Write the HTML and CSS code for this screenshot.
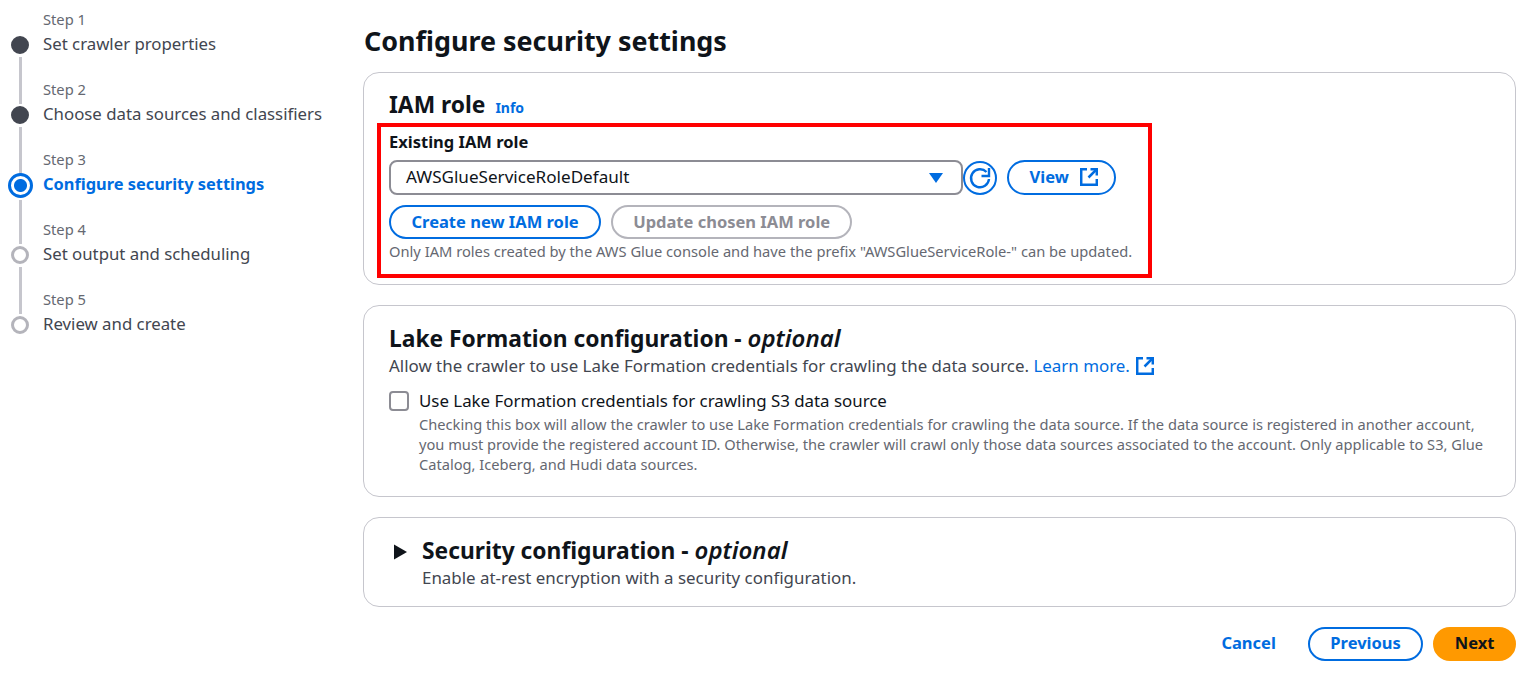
FILE: index.html
```html
<!DOCTYPE html>
<html>
<head>
    <title>Configure security settings</title>
    <link rel="stylesheet" href="styles.css">
</head>
<body>
    <div class="page">
        <ul class="steps">
            <li class="step done">
                <span class="step-num">Step 1</span>
                <span class="dot"></span>
                <span class="step-name">Set crawler properties</span>
            </li>
            <li class="step done">
                <span class="step-num">Step 2</span>
                <span class="dot"></span>
                <span class="step-name">Choose data sources and classifiers</span>
            </li>
            <li class="step active">
                <span class="step-num">Step 3</span>
                <span class="dot"></span>
                <span class="step-name">Configure security settings</span>
            </li>
            <li class="step">
                <span class="step-num">Step 4</span>
                <span class="dot"></span>
                <span class="step-name">Set output and scheduling</span>
            </li>
            <li class="step last">
                <span class="step-num">Step 5</span>
                <span class="dot"></span>
                <span class="step-name">Review and create</span>
            </li>
        </ul>

        <main class="content">
            <h1>Configure security settings</h1>

            <section class="card card-iam">
                <h2>IAM role <a href="#" class="info">Info</a></h2>
                <div class="highlight">
                    <label class="field-label">Existing IAM role</label>
                    <div class="role-row">
                        <div class="select">
                            <span>AWSGlueServiceRoleDefault</span>
                            <svg class="caret" width="14" height="10" viewBox="0 0 14 10"><path d="M0 0h14L7 10z" fill="#006ce0"/></svg>
                        </div>
                        <button class="icon-btn">
                            <svg width="24" height="24" viewBox="0 0 24 24" fill="none" stroke="#006ce0" stroke-width="2.4"><path d="M21 13A9 9 0 1 1 18.500 6"/><path d="M21 2v8h-7.500"/></svg>
                        </button>
                        <button class="btn view-btn">View
                            <svg class="ext" width="18" height="18" viewBox="0 0 18 18" fill="none" stroke="#006ce0" stroke-width="2.5"><path d="M7 1.200H1.200v15.600h15.600V11"/><path d="M10.500 1.200h6.300v6.300"/><path d="M16.800 1.200L8.500 9.500"/></svg>
                        </button>
                    </div>
                    <div class="btn-row">
                        <button class="btn">Create new IAM role</button>
                        <button class="btn disabled">Update chosen IAM role</button>
                    </div>
                    <p class="hint">Only IAM roles created by the AWS Glue console and have the prefix "AWSGlueServiceRole-" can be updated.</p>
                </div>
            </section>

            <section class="card card-lake">
                <h2>Lake Formation configuration - <i>optional</i></h2>
                <p class="desc">Allow the crawler to use Lake Formation credentials for crawling the data source. <a href="#" class="learn">Learn more.</a>
                    <svg class="ext" width="18" height="18" viewBox="0 0 18 18" fill="none" stroke="#006ce0" stroke-width="2.5"><path d="M7 1.200H1.200v15.600h15.600V11"/><path d="M10.500 1.200h6.300v6.300"/><path d="M16.800 1.200L8.500 9.500"/></svg>
                </p>
                <div class="check-row">
                    <span class="checkbox"></span>
                    <div>
                        <div class="check-label">Use Lake Formation credentials for crawling S3 data source</div>
                        <p class="hint">Checking this box will allow the crawler to use Lake Formation credentials for crawling the data source. If the data source is registered in another account, you must provide the registered account ID. Otherwise, the crawler will crawl only those data sources associated to the account. Only applicable to S3, Glue Catalog, Iceberg, and Hudi data sources.</p>
                    </div>
                </div>
            </section>

            <section class="card card-sec">
                <svg class="arrow" width="14" height="16" viewBox="0 0 14 16"><path d="M0 .5l13 7.500-13 7.500z" fill="#0f141a"/></svg>
                <div>
                    <h2>Security configuration - <i>optional</i></h2>
                    <p class="desc">Enable at-rest encryption with a security configuration.</p>
                </div>
            </section>

            <div class="actions">
                <a href="#" class="cancel">Cancel</a>
                <button class="btn">Previous</button>
                <button class="btn primary">Next</button>
            </div>
        </main>
    </div>
</body>
</html>
```

FILE: styles.css
```css
* {
    box-sizing: border-box;
}
body {
    margin: 0;
    background-color: #fff;
    color: #0f141a;
    font-family: "Noto Sans", sans-serif;
    font-size: 16.8px;
}
a {
    color: #006ce0;
    text-decoration: none;
}
p {
    margin: 0;
}
.page {
    display: flex;
    height: 673px;
    overflow: hidden;
}

/* left wizard steps */
.steps {
    list-style: none;
    margin: 0;
    padding: 10px 0 0 0;
    width: 363px;
    flex-shrink: 0;
}
.step {
    position: relative;
    display: grid;
    grid-template-columns: 43px 1fr;
    grid-template-rows: 20px 28px;
    height: 70px;
    color: #424650;
}
.step-num {
    grid-column: 2;
    font-size: 14.7px;
    line-height: 18px;
    color: #656871;
}
.step-name {
    grid-column: 2;
    grid-row: 2;
    line-height: 28px;
    white-space: nowrap;
}
.dot {
    grid-column: 1;
    grid-row: 2;
    align-self: center;
    justify-self: start;
    margin-left: 11px;
    margin-top: 2px;
    width: 18px;
    height: 18px;
    border-radius: 50%;
    background-color: #fff;
    border: 3px solid #b4b4bb;
}
.step::after {
    content: "";
    position: absolute;
    left: 19px;
    top: 47px;
    width: 3px;
    height: 47px;
    background-color: #c6c6cd;
}
.step.last::after {
    display: none;
}
.step.done .dot {
    background-color: #424650;
    border-color: #424650;
}
.step.active .step-name {
    color: #006ce0;
    font-weight: 700;
    font-size: 16.4px;
}
.step.active .dot {
    margin-left: 8px;
    width: 25px;
    height: 25px;
    border: 3px solid #006ce0;
    background: radial-gradient(circle, #006ce0 0 6px, #fff 7px);
}
.step.active::after {
    top: 50px;
    height: 44px;
}

/* main column */
.content {
    flex: 1;
    padding-right: 12px;
}
h1 {
    margin: 21px 0 0 1px;
    font-size: 26.9px;
    line-height: 40px;
    font-weight: 700;
    height: 51px;
}
h2 {
    margin: 0;
    height: 30px;
    font-size: 22.8px;
    line-height: 30px;
    font-weight: 700;
}
h2 i {
    font-size: 24px;
    font-weight: 600;
}
.card {
    border: 1px solid #c6c6cd;
    border-radius: 16px;
    padding: 0 25px;
    margin-bottom: 20px;
}
.card-iam {
    height: 213px;
    padding-top: 17px;
}
.info {
    font-size: 14px;
    font-weight: 700;
    margin-left: 4px;
}
.highlight {
    width: 775px;
    height: 155px;
    margin: 3px 0 0 -12px;
    padding: 5px 8px 0 8px;
    border: 4px solid #ff0000;
}
.field-label {
    display: block;
    font-weight: 700;
    line-height: 20px;
    font-size: 16.5px;
}
.role-row {
    display: flex;
    align-items: center;
    margin-top: 8px;
}
.select {
    display: flex;
    justify-content: space-between;
    align-items: center;
    width: 574px;
    height: 35px;
    padding: 0 18px 0 15px;
    border: 2px solid #8c8c94;
    border-radius: 8px;
    color: #0f141a;
    font-size: 17.1px;
}
.select span {
    margin-bottom: 2px;
}
.icon-btn {
    width: 34px;
    height: 34px;
    padding: 0;
    border: 2px solid #006ce0;
    border-radius: 50%;
    background: #fff;
    display: flex;
    align-items: center;
    justify-content: center;
}
.btn {
    font-family: inherit;
    font-size: 16.5px;
    font-weight: 700;
    color: #006ce0;
    background: #fff;
    border: 2px solid #006ce0;
    border-radius: 20px;
    height: 34px;
    padding: 0 20.5px 2px 20.5px;
    display: inline-flex;
    align-items: center;
    white-space: nowrap;
}
.view-btn {
    width: 109px;
    height: 35px;
    margin-left: 10px;
    padding-right: 0;
    gap: 11px;
}
.ext {
    flex-shrink: 0;
}
.btn.disabled {
    color: #8c8c94;
    border-color: #b4b4bb;
    padding: 0 20px 2px 20px;
}
.btn-row {
    display: flex;
    gap: 10px;
    margin-top: 10px;
}
.hint {
    font-size: 14.7px;
    line-height: 20px;
    color: #656871;
}
.highlight .hint {
    margin-top: 2px;
}
.card-lake {
    height: 192px;
    padding-top: 17px;
}
.desc {
    font-size: 16.92px;
    line-height: 24px;
    color: #424650;
}
.card-lake .desc {
    margin-top: 1px;
}
.desc .ext {
    vertical-align: -3px;
    margin-left: 2px;
}
.check-row {
    display: flex;
    margin-top: 11px;
}
.check-row .hint {
    font-size: 14.65px;
    margin-top: 1px;
}
.checkbox {
    flex-shrink: 0;
    width: 20px;
    height: 20px;
    margin: 2px 10px 0 0;
    border: 2px solid #8c8c94;
    border-radius: 4px;
}
.check-label {
    font-size: 16.87px;
    line-height: 24px;
}
.card-sec {
    height: 90px;
    padding-top: 17px;
    display: flex;
}
.card-sec .desc {
    margin-top: 1px;
}
.arrow {
    flex-shrink: 0;
    margin: 9px 14px 0 5px;
}
.actions {
    display: flex;
    justify-content: flex-end;
    align-items: center;
}
.actions .btn {
    padding-bottom: 4px;
}
.cancel {
    font-weight: 700;
    font-size: 16.5px;
    margin: 0 32px 4px 0;
}
.btn.primary {
    margin-left: 10px;
    padding: 0 19.5px 4px 19.5px;
    background-color: #ff9900;
    border-color: #ff9900;
    color: #0f141a;
}
```
